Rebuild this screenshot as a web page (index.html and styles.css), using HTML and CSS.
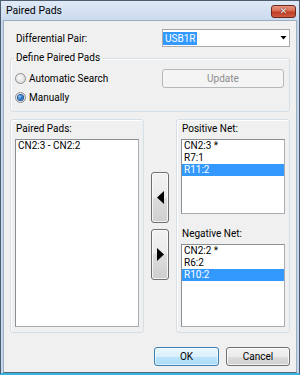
FILE: index.html
```html
<!DOCTYPE html>
<html>
<head>
<meta charset="utf-8">
<link rel="stylesheet" href="styles.css">
</head>
<body>
<div class="window">
  <div class="titlebar">
    <span class="title">Paired Pads</span>
    <span class="close-btn"><span class="close-x">✕</span></span>
  </div>
  <div class="client">
    <div class="pair">
      <span class="pair-label">Differential Pair:</span>
      <div class="combo">
        <span class="combo-sel">USB1R</span>
        <svg class="combo-arrow" width="7" height="4" viewBox="0 0 7 4"><polygon points="0.5,0 6.5,0 3.5,3.5" fill="#000"/></svg>
      </div>
    </div>
    <fieldset class="define">
      <legend>Define Paired Pads</legend>
      <div class="define-grid">
        <div class="radio"><span class="rb"></span><span>Automatic Search</span></div>
        <div class="btn disabled">Update</div>
        <div class="radio"><span class="rb checked"></span><span>Manually</span></div>
      </div>
    </fieldset>
    <div class="lower">
      <div class="panel">
        <div class="panel-label">Paired Pads:</div>
        <div class="listbox grow">
          <div class="item">CN2:3 - CN2:2</div>
        </div>
      </div>
      <div class="arrows">
        <div class="btn arrow-btn">
          <svg width="7" height="13" viewBox="0 0 7 13"><polygon points="7,0 0,6.5 7,13" fill="#000"/></svg>
        </div>
        <div class="btn arrow-btn">
          <svg width="7" height="13" viewBox="0 0 7 13"><polygon points="0,0 7,6.5 0,13" fill="#000"/></svg>
        </div>
      </div>
      <div class="panel">
        <div class="panel-label">Positive Net:</div>
        <div class="listbox pos">
          <div class="item">CN2:3 *</div>
          <div class="item">R7:1</div>
          <div class="item selected">R11:2</div>
        </div>
        <div class="panel-label second">Negative Net:</div>
        <div class="listbox grow">
          <div class="item">CN2:2 *</div>
          <div class="item">R6:2</div>
          <div class="item selected">R10:2</div>
        </div>
      </div>
    </div>
    <div class="footer">
      <div class="btn default ok">OK</div>
      <div class="btn cancel">Cancel</div>
    </div>
  </div>
</div>
</body>
</html>
```
FILE: styles.css
```css
* { box-sizing: border-box; }

body {
  margin: 0;
  font-family: Roboto, "Noto Sans", sans-serif;
  font-size: 10px;
  color: #000;
  background: #fff;
}

.window {
  width: 300px;
  height: 375px;
  border: 1px solid #4d5d70;
  border-bottom: 2px solid #35b4dd;
  background: #c6d6ea;
  padding: 0 2px;
  display: flex;
  flex-direction: column;
}

.titlebar {
  height: 19px;
  margin: 0 -2px;
  padding: 0 3px 0 5px;
  background: linear-gradient(#e0eaf6, #cadaee);
  display: flex;
  justify-content: space-between;
  align-items: flex-start;
}

.title {
  line-height: 20px;
  font-size: 10.5px;
}

.close-btn {
  margin-top: 4px;
  width: 25px;
  height: 13px;
  flex: none;
  border: 1px solid #6b2a1e;
  border-radius: 3px;
  background: linear-gradient(to bottom, #e9967f 0%, #d86a52 45%, #c13d25 55%, #cf5a42 100%);
  display: flex;
  align-items: center;
  justify-content: center;
}

.close-x {
  color: #fff;
  font-family: "DejaVu Sans", sans-serif;
  font-size: 9px;
  font-weight: bold;
  line-height: 9px;
  text-shadow: 0 0 1px #5a1a0e, 0 0 1px #5a1a0e;
}

.client {
  flex: 1;
  background: #f0f0f0;
  border: 1px solid #9eaec2;
  border-bottom-color: #56657a;
  padding: 8px 6px 6px;
  display: flex;
  flex-direction: column;
}

.pair {
  display: grid;
  grid-template-columns: 152px 1fr;
  height: 18px;
  align-items: center;
}

.pair-label {
  padding-left: 6px;
}

.combo {
  height: 18px;
  background: #fff;
  border: 1px solid #abadb3;
  border-top-color: #a3a6ad;
  display: flex;
  align-items: center;
  justify-content: space-between;
  padding: 0 2px 0 0;
}

.combo-sel {
  background: #3399ff;
  color: #fff;
  line-height: 13px;
  padding: 0 2px;
}

.define {
  margin: 4px 0 0;
  padding: 4px 5px 4px 3px;
  border: 1px solid #d5dfe5;
  border-radius: 3px;
  min-width: 0;
  box-shadow: inset 1px 1px 0 #fff;
}

.define legend {
  padding: 0 2px;
  line-height: 14px;
}

.define-grid {
  display: grid;
  grid-template-columns: 1fr 122px;
  grid-template-rows: 19px 19px;
  align-items: center;
}

.radio {
  display: flex;
  align-items: center;
  gap: 3px;
  padding-left: 1px;
}

.rb {
  width: 11px;
  height: 11px;
  border-radius: 50%;
  border: 1px solid #8f8f8f;
  background: radial-gradient(circle at 40% 40%, #f8f8f8 0%, #e2e2e2 60%, #cfcfcf 100%);
  display: flex;
  align-items: center;
  justify-content: center;
}

.rb.checked::after {
  content: "";
  width: 5px;
  height: 5px;
  border-radius: 50%;
  background: radial-gradient(circle at 35% 35%, #9fd3ff 0%, #2f7bd0 45%, #0d4a92 100%);
  box-shadow: 0 0 0 1px #1c5aa0;
}

.btn {
  height: 19px;
  border: 1px solid #707070;
  border-radius: 3px;
  background: linear-gradient(#f2f2f2 0%, #ebebeb 50%, #dddddd 50%, #cfcfcf 100%);
  box-shadow: inset 0 0 0 1px rgba(255, 255, 255, 0.75);
  display: flex;
  align-items: center;
  justify-content: center;
}

.btn.disabled {
  border-color: #b5b9bc;
  background: #f4f4f4;
  color: #8d8d8d;
  box-shadow: none;
}

.btn.default {
  border-color: #3c7fb1;
  background: linear-gradient(#eaf6fd 0%, #d9f0fc 50%, #bee6fd 50%, #a7d9f5 100%);
  box-shadow: inset 0 0 0 1px rgba(255, 255, 255, 0.6);
}

.lower {
  display: grid;
  grid-template-columns: 134px 18px 114px;
  column-gap: 7px;
  height: 214px;
  margin-top: 7px;
}

.panel {
  border: 1px solid #d5dfe5;
  border-radius: 3px;
  padding: 2px 4px 5px;
  display: flex;
  flex-direction: column;
  box-shadow: inset 1px 1px 0 #fff;
  min-height: 0;
}

.panel-label {
  line-height: 14px;
  margin-bottom: 3px;
  padding-left: 1px;
}

.panel-label.second {
  margin-top: 13px;
}

.listbox {
  background: #fff;
  border: 1px solid #828790;
  border-color: #8b9097 #a9acb2 #a9acb2 #8b9097;
}

.listbox.pos {
  height: 75px;
}

.listbox.grow {
  flex: 1;
}

.item {
  height: 12px;
  line-height: 12px;
  padding-left: 2px;
  white-space: nowrap;
}

.item.selected {
  background: #3399ff;
  color: #fff;
}

.arrows {
  display: flex;
  flex-direction: column;
  gap: 6px;
  padding-top: 53px;
}

.arrow-btn {
  height: 51px;
}

.footer {
  display: flex;
  justify-content: flex-end;
  gap: 7px;
  margin-top: 14px;
}

.btn.ok {
  width: 65px;
}

.btn.cancel {
  width: 64px;
}
```
